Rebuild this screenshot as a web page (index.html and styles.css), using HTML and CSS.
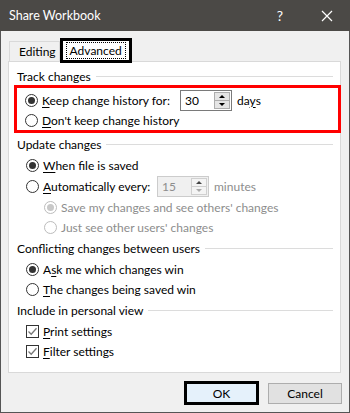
FILE: index.html
```html
<!DOCTYPE html>
<html lang="en">
<head>
    <meta charset="UTF-8">
    <title>Share Workbook</title>
    <link rel="stylesheet" href="styles.css">
</head>
<body>
    <div class="window">
        <div class="titlebar">
            <span class="title">Share Workbook</span>
            <span class="help">?</span>
            <svg class="close" width="12" height="12" viewBox="0 0 12 12">
                <path d="M1 1 L11 11 M11 1 L1 11" stroke="#fff" stroke-width="1.2" fill="none"/>
            </svg>
        </div>
        <div class="tabs">
            <div class="tab">Editing</div>
            <div class="tab active"><span class="focus">Advanced</span></div>
        </div>
        <div class="panel">
            <div class="group-title"><span>Track changes</span><i></i></div>
            <div class="highlight">
                <div class="row row-spin">
                    <span class="radio on"></span>
                    <span class="label label-keep"><u>K</u>eep change history for:</span>
                    <span class="spin">
                        <span class="spin-val">30</span>
                        <span class="spin-btns"><b class="up"></b><b class="down"></b></span>
                    </span>
                    <span class="unit">da<u>y</u>s</span>
                </div>
                <div class="row row-short">
                    <span class="radio"></span>
                    <span class="label"><u>D</u>on't keep change history</span>
                </div>
            </div>

            <div class="group-title gap"><span>Update changes</span><i></i></div>
            <div class="row first">
                <span class="radio on"></span>
                <span class="label"><u>W</u>hen file is saved</span>
            </div>
            <div class="row row-spin">
                <span class="radio"></span>
                <span class="label label-auto"><u>A</u>utomatically every:</span>
                <span class="spin disabled">
                    <span class="spin-val">15</span>
                    <span class="spin-btns"><b class="up"></b><b class="down"></b></span>
                </span>
                <span class="unit muted">minutes</span>
            </div>
            <div class="row sub">
                <span class="radio on disabled"></span>
                <span class="label muted">Save my changes and see others' changes</span>
            </div>
            <div class="row sub">
                <span class="radio disabled"></span>
                <span class="label muted">Just see other users' changes</span>
            </div>

            <div class="group-title gap"><span>Conflicting changes between users</span><i></i></div>
            <div class="row first">
                <span class="radio on"></span>
                <span class="label">A<u>s</u>k me which changes win</span>
            </div>
            <div class="row">
                <span class="radio"></span>
                <span class="label"><u>T</u>he changes being saved win</span>
            </div>

            <div class="group-title gap"><span>Include in personal view</span><i></i></div>
            <div class="row first">
                <span class="check"><svg width="11" height="11" viewBox="0 0 11 11"><path d="M1.5 5.5 L4.2 8.2 L9.5 2.2" stroke="#777" stroke-width="1.3" fill="none"/></svg></span>
                <span class="label"><u>P</u>rint settings</span>
            </div>
            <div class="row">
                <span class="check"><svg width="11" height="11" viewBox="0 0 11 11"><path d="M1.5 5.5 L4.2 8.2 L9.5 2.2" stroke="#777" stroke-width="1.3" fill="none"/></svg></span>
                <span class="label"><u>F</u>ilter settings</span>
            </div>
        </div>
        <div class="buttons">
            <button class="button default">OK</button>
            <button class="button">Cancel</button>
        </div>
    </div>
</body>
</html>
```

FILE: styles.css
```css
html, body {
    margin: 0;
    padding: 0;
}
body {
    font-family: Lato, "Noto Sans", sans-serif;
    font-size: 12px;
    color: #000;
    background: #f0f0f0;
}
u {
    text-decoration-thickness: 1px;
    text-underline-offset: 2px;
}
.window {
    width: 350px;
    height: 413px;
    box-sizing: border-box;
    border: 1px solid #555555;
    border-top: none;
    background: #f0f0f0;
}
.titlebar {
    height: 31px;
    margin: 0 -1px;
    background: #4b4946;
    color: #fff;
    display: flex;
    align-items: center;
}
.title {
    font-size: 12.5px;
    margin-left: 9px;
    flex: 1;
}
.help {
    font-size: 14px;
    margin-right: 38px;
}
.close {
    margin-right: 17px;
}
.tabs {
    display: flex;
    align-items: flex-end;
    height: 30px;
    margin-left: 8px;
}
.tab {
    height: 20px;
    line-height: 20px;
    padding: 0 3px 0 9px;
    border: 1px solid #d9d9d9;
    border-bottom: none;
    margin-bottom: -1px;
}
.tab.active {
    background: #fff;
    border: 3px solid #000;
    height: 19px;
    line-height: 19px;
    padding: 0 3px;
    margin-bottom: -2px;
}
.focus {
    outline: 1px dotted #000;
    outline-offset: -1px;
    padding: 0 4px;
    display: inline-block;
    height: 17px;
    line-height: 17px;
}
.panel {
    height: 312px;
    margin: 0 8px 0 7px;
    background: #fff;
    border: 1px solid #d9d9d9;
    box-sizing: border-box;
    padding: 5px 7px 0 7px;
}
.group-title {
    display: flex;
    align-items: center;
    height: 18px;
}
.group-title span {
    margin-right: 5px;
    margin-left: 1px;
}
.group-title i {
    flex: 1;
    border-top: 1px solid #dcdcdc;
}
.group-title.gap {
    margin-top: 2px;
}
.highlight {
    border: 3px solid #ff0000;
    margin: 0 -8px 0 -2px;
    padding: 1px 0 0 8px;
    height: 41px;
}
.row {
    display: flex;
    align-items: center;
    height: 20px;
    padding-left: 10px;
}
.highlight .row {
    padding-left: 0;
}
.row.first {
    margin-top: 2px;
}
.row-spin {
    height: 22px;
}
.row-short {
    height: 19px;
}
.row.sub {
    padding-left: 28px;
}
.radio {
    width: 11px;
    height: 11px;
    border: 1px solid #333;
    border-radius: 50%;
    margin-right: 4px;
    display: flex;
    align-items: center;
    justify-content: center;
    flex-shrink: 0;
}
.radio.on::after {
    content: "";
    width: 7px;
    height: 7px;
    border-radius: 50%;
    background: #333;
}
.radio.disabled {
    border-color: #bcbcbc;
}
.radio.on.disabled::after {
    background: #c8c8c8;
}
.check {
    width: 11px;
    height: 11px;
    border: 1px solid #333;
    margin-right: 4px;
    display: flex;
    align-items: center;
    justify-content: center;
}
.label-keep {
    width: 138px;
    flex-shrink: 0;
}
.label-auto {
    width: 114px;
    flex-shrink: 0;
}
.muted {
    color: #8d8d8d;
}
.spin {
    display: flex;
    width: 52px;
    height: 21px;
    flex-shrink: 0;
    box-sizing: border-box;
    border: 1px solid #7a7a7a;
    background: #fff;
}
.spin.disabled {
    border-color: #cccccc;
    background: #f0f0f0;
    color: #8d8d8d;
}
.spin-val {
    flex: 1;
    padding-left: 4px;
    line-height: 19px;
}
.spin-btns {
    width: 16px;
    display: flex;
    flex-direction: column;
    padding: 1px 1px 1px 0;
}
.spin-btns b {
    flex: 1;
    border: 1px solid #adadad;
    background: #e5e5e5;
    display: flex;
    align-items: center;
    justify-content: center;
}
.spin-btns b + b {
    margin-top: -1px;
}
.spin.disabled .spin-btns b {
    border-color: #d0d0d0;
    background: #f4f4f4;
}
.up::after {
    content: "";
    border: 3px solid transparent;
    border-bottom: 3px solid #000;
    border-top: none;
}
.down::after {
    content: "";
    border: 3px solid transparent;
    border-top: 3px solid #000;
    border-bottom: none;
}
.spin.disabled .up::after {
    border-bottom-color: #444;
}
.spin.disabled .down::after {
    border-top-color: #aaa;
}
.unit {
    margin-left: 5px;
}
.buttons {
    display: flex;
    justify-content: flex-end;
    align-items: center;
    gap: 9px;
    margin-top: 8px;
    padding-right: 7px;
}
.button {
    font-family: inherit;
    font-size: 12px;
    width: 74px;
    height: 21px;
    border: 1px solid #adadad;
    background: #e1e1e1;
    padding: 0;
}
.button.default {
    width: 75px;
    height: 24px;
    border: 3px solid #000;
    background: #e5f1fb;
}
```
